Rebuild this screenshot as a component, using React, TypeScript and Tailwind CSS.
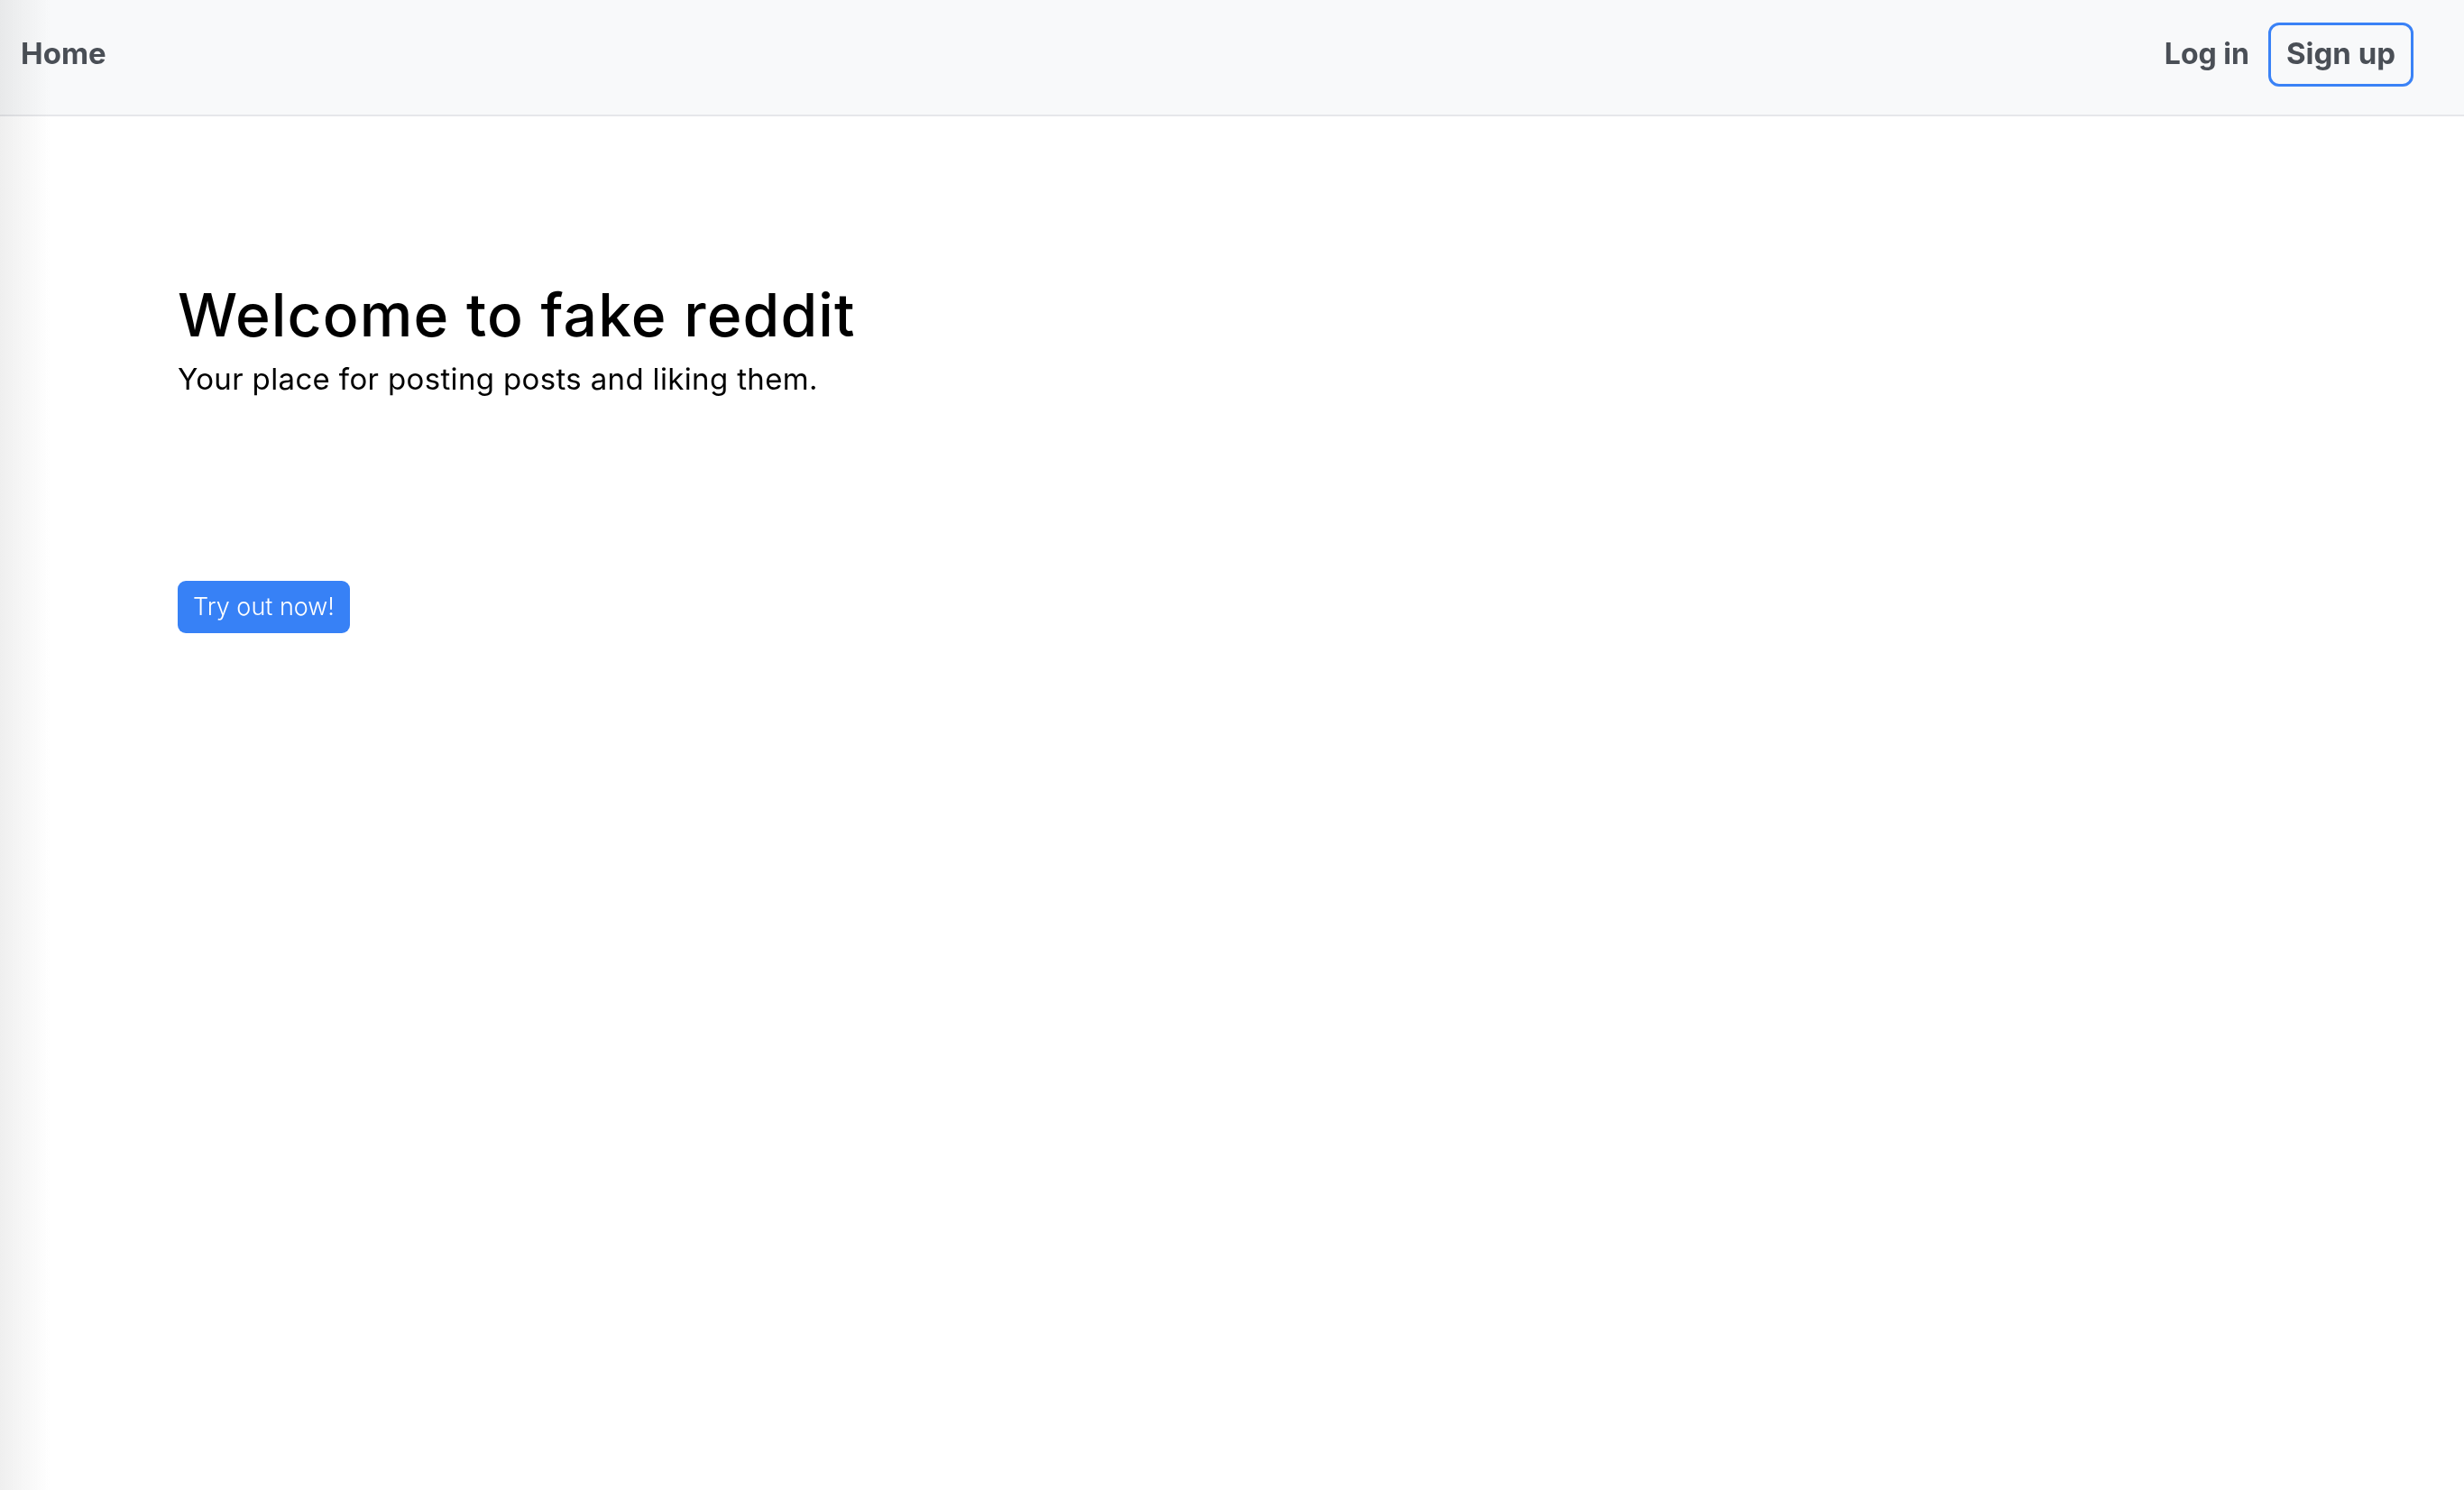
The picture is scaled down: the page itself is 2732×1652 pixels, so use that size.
export default function App() {
  return (
    <div
      className="relative min-h-screen w-full bg-white text-black"
      style={{ fontFamily: "Inter, 'Noto Sans', sans-serif" }}
    >
      {/* soft shade along the left edge */}
      <div className="pointer-events-none absolute inset-y-0 left-0 z-10 w-[56px] bg-gradient-to-r from-[#efefef] to-transparent mix-blend-multiply" />

      <header className="flex h-[129px] items-center justify-between border-b-2 border-[#e6e7ea] bg-[#f8f9fa] pb-[7px] pl-[23px] pr-[56px]">
        <a className="text-[33px] font-bold text-[#4a4f56]">Home</a>
        <nav className="flex items-center gap-[21px]">
          <a className="text-[32px] font-bold text-[#4a4f56]">Log in</a>
          <a className="flex h-[71px] items-center rounded-[12px] border-[3px] border-[#3a82f6] px-[17px] text-[33px] font-bold text-[#4a4f56]">
            Sign up
          </a>
        </nav>
      </header>

      <main className="pl-[197px] pt-[176px]">
        <h1 className="text-[66px] font-medium leading-[88px] tracking-[1.1px]">Welcome to fake reddit</h1>
        <p className="mt-[3px] text-[33px] leading-[48px] tracking-[0.35px]">Your place for posting posts and liking them.</p>
        <button className="mt-[200px] h-[58px] rounded-[9px] bg-[#3781f6] px-[17px] text-[27px] font-light text-white">
          Try out now!
        </button>
      </main>
    </div>
  )
}
